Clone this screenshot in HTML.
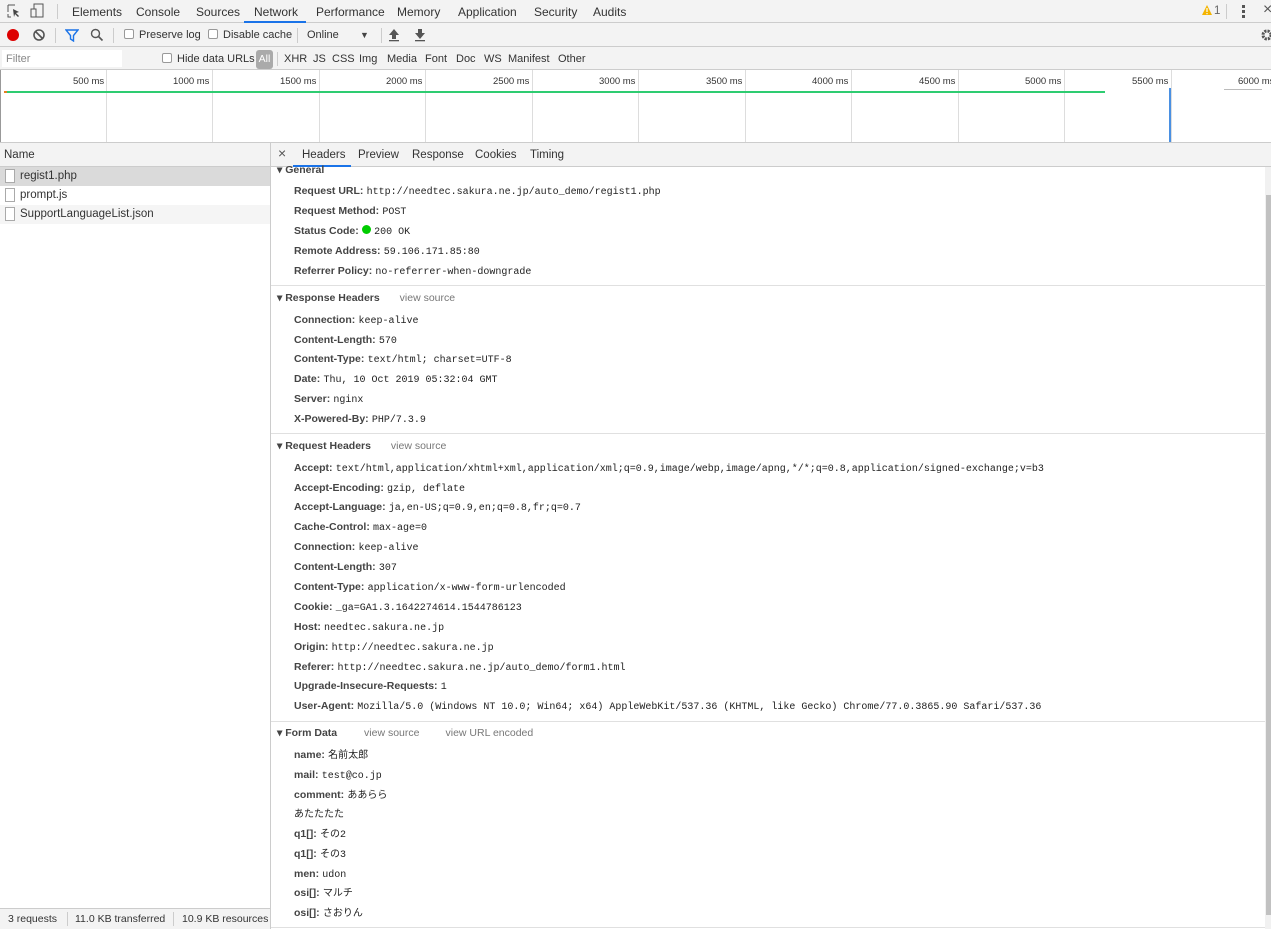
<!DOCTYPE html><html><head><meta charset="utf-8"><style>
*{margin:0;padding:0;box-sizing:border-box}
body{width:1271px;height:929px;overflow:hidden;background:#fff;font-family:"Liberation Sans","Noto Sans CJK JP",sans-serif;font-size:11.5px;color:#333;position:relative}
.a{position:absolute;white-space:nowrap;line-height:15px}
.a span{line-height:15px}
.bar{position:absolute;left:0;width:1271px;background:#f3f3f3;border-bottom:1px solid #ccc}
.tab{position:absolute;top:5px;font-size:12px;color:#333;white-space:nowrap}
.mono{font-family:"Liberation Mono","Noto Sans CJK JP",monospace;font-size:10px;color:#222}
.k{font-weight:bold;color:#444;font-size:10.5px}
.sec{font-weight:bold;color:#444;font-size:10.5px}
.vs{color:#777;font-size:10.5px;font-weight:normal}
.tm{position:absolute;top:76px;font-size:9.5px;color:#333;white-space:nowrap}
.vl{position:absolute;top:70px;height:72px;width:1px;background:#ddd}
.cb{display:inline-block;width:10px;height:10px;border:1px solid #999;border-radius:2px;vertical-align:-1px;margin-right:5px;background:#fff}
.f{position:absolute;top:53px;font-size:11px;white-space:nowrap}
</style></head><body>
<div class="bar" style="top:0;height:23px"></div>
<svg class="a" style="left:7px;top:4px" width="14" height="14"><path d="M1 1h7M1 1v7M1 10v3h3" stroke="#555" fill="none"/><path d="M6 5l6 3-3 1 3 3-1 1-3-3-1 3z" fill="#444"/></svg>
<svg class="a" style="left:30px;top:3px" width="16" height="16"><rect x="4" y="1" width="9" height="13" stroke="#555" fill="none"/><rect x="1" y="6" width="5" height="8" stroke="#555" fill="#f3f3f3"/></svg>
<div class="a" style="left:57px;top:4px;width:1px;height:15px;background:#ccc"></div>
<span class="tab" style="left:72px">Elements</span><span class="tab" style="left:136px">Console</span><span class="tab" style="left:196px">Sources</span><span class="tab" style="left:254px">Network</span><span class="tab" style="left:316px">Performance</span><span class="tab" style="left:397px">Memory</span><span class="tab" style="left:458px">Application</span><span class="tab" style="left:534px">Security</span><span class="tab" style="left:593px">Audits</span>
<div class="a" style="left:244px;top:21px;width:62px;height:2px;background:#1a73e8"></div>
<svg class="a" style="left:1201px;top:4px" width="12" height="12"><path d="M6 1L11 11H1z" fill="#f4b400"/><rect x="5.4" y="4" width="1.2" height="4" fill="#fff"/><rect x="5.4" y="9" width="1.2" height="1.2" fill="#fff"/></svg>
<span class="a" style="left:1214px;top:4px;color:#666">1</span>
<div class="a" style="left:1226px;top:4px;width:1px;height:15px;background:#ccc"></div>
<div class="a" style="left:1242px;top:5px;width:3px;height:3px;background:#555;box-shadow:0 5px 0 #555,0 10px 0 #555"></div>
<span class="a" style="left:1263px;top:2px;font-size:16px;color:#555">×</span>

<div class="bar" style="top:23px;height:24px"></div>
<div class="a" style="left:7px;top:29px;width:12px;height:12px;border-radius:50%;background:#d00"></div>
<svg class="a" style="left:33px;top:29px" width="12" height="12"><circle cx="6" cy="6" r="5" stroke="#555" stroke-width="1.6" fill="none"/><path d="M2.5 2.5l7 7" stroke="#555" stroke-width="1.6"/></svg>
<div class="a" style="left:55px;top:28px;width:1px;height:15px;background:#ccc"></div>
<svg class="a" style="left:65px;top:29px" width="14" height="13"><path d="M1 1h12L8.5 6.5V12L5.5 10V6.5z" stroke="#1a73e8" stroke-width="1.4" fill="none"/></svg>
<svg class="a" style="left:90px;top:28px" width="14" height="14"><circle cx="5.5" cy="5.5" r="4" stroke="#555" stroke-width="1.4" fill="none"/><path d="M8.5 8.5l4 4" stroke="#555" stroke-width="1.6"/></svg>
<div class="a" style="left:113px;top:28px;width:1px;height:15px;background:#ccc"></div>
<span class="a" style="left:124px;top:28px;font-size:11px"><span class="cb"></span>Preserve log</span>
<span class="a" style="left:208px;top:28px;font-size:11px"><span class="cb"></span>Disable cache</span>
<div class="a" style="left:297px;top:28px;width:1px;height:15px;background:#ccc"></div>
<span class="a" style="left:307px;top:28px;font-size:11px">Online</span>
<span class="a" style="left:360px;top:28px;font-size:9px;color:#444">▼</span>
<div class="a" style="left:381px;top:28px;width:1px;height:15px;background:#ccc"></div>
<svg class="a" style="left:388px;top:28px" width="12" height="14"><path d="M6 1l5 6H8v4H4V7H1z" fill="#555"/><rect x="1" y="12" width="10" height="1.3" fill="#555"/></svg>
<svg class="a" style="left:414px;top:28px" width="12" height="14"><path d="M6 11l5-6H8V1H4v4H1z" fill="#555"/><rect x="1" y="12" width="10" height="1.3" fill="#555"/></svg>
<svg class="a" style="left:1260px;top:28px" width="12" height="14"><circle cx="7" cy="7" r="4" fill="none" stroke="#555" stroke-width="3" stroke-dasharray="2.2 1"/></svg>

<div class="bar" style="top:47px;height:23px"></div>
<div class="a" style="left:2px;top:50px;width:120px;height:17px;background:#fff"></div>
<span class="a" style="left:6px;top:52px;color:#888;font-size:11px">Filter</span>
<span class="a" style="left:162px;top:52px;font-size:11px"><span class="cb"></span>Hide data URLs</span>
<div class="a" style="left:256px;top:50px;width:17px;height:19px;background:#aaa;border-radius:3px;color:#fff;text-align:center;line-height:19px;font-size:10.5px">All</div>
<div class="a" style="left:277px;top:52px;width:1px;height:14px;background:#ccc"></div>
<span class="f" style="left:284px">XHR</span><span class="f" style="left:313px">JS</span><span class="f" style="left:332px">CSS</span><span class="f" style="left:359px">Img</span><span class="f" style="left:387px">Media</span><span class="f" style="left:425px">Font</span><span class="f" style="left:456px">Doc</span><span class="f" style="left:484px">WS</span><span class="f" style="left:508px">Manifest</span><span class="f" style="left:558px">Other</span>

<div class="vl" style="left:0;background:#999"></div>
<div class="vl" style="left:106px"></div><div class="vl" style="left:212px"></div><div class="vl" style="left:319px"></div><div class="vl" style="left:425px"></div><div class="vl" style="left:532px"></div><div class="vl" style="left:638px"></div><div class="vl" style="left:745px"></div><div class="vl" style="left:851px"></div><div class="vl" style="left:958px"></div><div class="vl" style="left:1064px"></div><div class="vl" style="left:1171px"></div>
<span class="tm" style="left:73px">500 ms</span><span class="tm" style="left:173px">1000 ms</span><span class="tm" style="left:280px">1500 ms</span><span class="tm" style="left:386px">2000 ms</span><span class="tm" style="left:493px">2500 ms</span><span class="tm" style="left:599px">3000 ms</span><span class="tm" style="left:706px">3500 ms</span><span class="tm" style="left:812px">4000 ms</span><span class="tm" style="left:919px">4500 ms</span><span class="tm" style="left:1025px">5000 ms</span><span class="tm" style="left:1132px">5500 ms</span><span class="tm" style="left:1238px">6000 ms</span>
<div class="a" style="left:4px;top:91px;width:1101px;height:2px;background:#2ecc71"></div>
<div class="a" style="left:4px;top:91px;width:3px;height:2px;background:#e67e22"></div>
<div class="a" style="left:1169px;top:88px;width:2px;height:54px;background:#4a90e2"></div>
<div class="a" style="left:1224px;top:89px;width:38px;height:1px;background:#bbb"></div>
<div class="a" style="left:0;top:142px;width:1271px;height:1px;background:#ccc"></div>

<div class="bar" style="top:143px;height:24px"></div>
<span class="a" style="left:4px;top:148px">Name</span>
<div class="a" style="left:270px;top:143px;width:1px;height:786px;background:#ccc"></div>
<span class="a" style="left:278px;top:146px;font-size:14px;color:#555">×</span>
<span class="a" style="left:302px;top:148px">Headers</span><span class="a" style="left:358px;top:148px">Preview</span><span class="a" style="left:412px;top:148px">Response</span><span class="a" style="left:475px;top:148px">Cookies</span><span class="a" style="left:530px;top:148px">Timing</span>
<div class="a" style="left:293px;top:165px;width:58px;height:2px;background:#1a73e8"></div>

<div class="a" style="left:0;top:167px;width:270px;height:19px;background:#dadada"></div>
<div class="a" style="left:0;top:205px;width:270px;height:19px;background:#f5f5f5"></div>
<div class="a" style="left:5px;top:169px;width:10px;height:14px;border:1px solid #aaa;background:#fff"></div>
<div class="a" style="left:5px;top:188px;width:10px;height:14px;border:1px solid #aaa;background:#fff"></div>
<div class="a" style="left:5px;top:207px;width:10px;height:14px;border:1px solid #aaa;background:#fff"></div>
<span class="a" style="left:20px;top:169px">regist1.php</span>
<span class="a" style="left:20px;top:188px">prompt.js</span>
<span class="a" style="left:20px;top:207px">SupportLanguageList.json</span>

<div class="a" style="left:0;top:908px;width:270px;height:21px;background:#f3f3f3;border-top:1px solid #ccc"></div>
<span class="a" style="left:8px;top:912px;font-size:10.5px">3 requests</span>
<div class="a" style="left:67px;top:912px;width:1px;height:14px;background:#ccc"></div>
<span class="a" style="left:75px;top:912px;font-size:10.5px">11.0 KB transferred</span>
<div class="a" style="left:173px;top:912px;width:1px;height:14px;background:#ccc"></div>
<span class="a" style="left:182px;top:912px;font-size:10.5px">10.9 KB resources</span>

<div class="a" style="left:1265px;top:167px;width:6px;height:762px;background:#f1f1f1"></div>
<div class="a" style="left:1266px;top:195px;width:5px;height:720px;background:#c1c1c1"></div>
<div class="a" style="left:271px;top:285px;width:994px;height:1px;background:#e0e0e0"></div>
<div class="a" style="left:271px;top:433px;width:994px;height:1px;background:#e0e0e0"></div>
<div class="a" style="left:271px;top:721px;width:994px;height:1px;background:#e0e0e0"></div>
<div class="a" style="left:271px;top:927px;width:994px;height:1px;background:#e0e0e0"></div>

<span class="a sec" style="left:277px;top:163px">▾ General</span>
<span class="a" style="left:294px;top:184px"><span class="k">Request URL:</span> <span class="mono">http://needtec.sakura.ne.jp/auto_demo/regist1.php</span></span>
<span class="a" style="left:294px;top:204px"><span class="k">Request Method:</span> <span class="mono">POST</span></span>
<span class="a" style="left:294px;top:224px"><span class="k">Status Code:</span> <span style="display:inline-block;width:9px;height:9px;border-radius:50%;background:#0c0"></span> <span class="mono">200 OK</span></span>
<span class="a" style="left:294px;top:244px"><span class="k">Remote Address:</span> <span class="mono">59.106.171.85:80</span></span>
<span class="a" style="left:294px;top:264px"><span class="k">Referrer Policy:</span> <span class="mono">no-referrer-when-downgrade</span></span>

<span class="a sec" style="left:277px;top:291px">▾ Response Headers <span class="vs" style="margin-left:17px">view source</span></span>
<span class="a" style="left:294px;top:313px"><span class="k">Connection:</span> <span class="mono">keep-alive</span></span>
<span class="a" style="left:294px;top:333px"><span class="k">Content-Length:</span> <span class="mono">570</span></span>
<span class="a" style="left:294px;top:352px"><span class="k">Content-Type:</span> <span class="mono">text/html; charset=UTF-8</span></span>
<span class="a" style="left:294px;top:372px"><span class="k">Date:</span> <span class="mono">Thu, 10 Oct 2019 05:32:04 GMT</span></span>
<span class="a" style="left:294px;top:392px"><span class="k">Server:</span> <span class="mono">nginx</span></span>
<span class="a" style="left:294px;top:412px"><span class="k">X-Powered-By:</span> <span class="mono">PHP/7.3.9</span></span>

<span class="a sec" style="left:277px;top:439px">▾ Request Headers <span class="vs" style="margin-left:17px">view source</span></span>
<span class="a" style="left:294px;top:461px"><span class="k">Accept:</span> <span class="mono">text/html,application/xhtml+xml,application/xml;q=0.9,image/webp,image/apng,*/*;q=0.8,application/signed-exchange;v=b3</span></span>
<span class="a" style="left:294px;top:481px"><span class="k">Accept-Encoding:</span> <span class="mono">gzip, deflate</span></span>
<span class="a" style="left:294px;top:500px"><span class="k">Accept-Language:</span> <span class="mono">ja,en-US;q=0.9,en;q=0.8,fr;q=0.7</span></span>
<span class="a" style="left:294px;top:520px"><span class="k">Cache-Control:</span> <span class="mono">max-age=0</span></span>
<span class="a" style="left:294px;top:540px"><span class="k">Connection:</span> <span class="mono">keep-alive</span></span>
<span class="a" style="left:294px;top:560px"><span class="k">Content-Length:</span> <span class="mono">307</span></span>
<span class="a" style="left:294px;top:580px"><span class="k">Content-Type:</span> <span class="mono">application/x-www-form-urlencoded</span></span>
<span class="a" style="left:294px;top:600px"><span class="k">Cookie:</span> <span class="mono">_ga=GA1.3.1642274614.1544786123</span></span>
<span class="a" style="left:294px;top:620px"><span class="k">Host:</span> <span class="mono">needtec.sakura.ne.jp</span></span>
<span class="a" style="left:294px;top:640px"><span class="k">Origin:</span> <span class="mono">http://needtec.sakura.ne.jp</span></span>
<span class="a" style="left:294px;top:660px"><span class="k">Referer:</span> <span class="mono">http://needtec.sakura.ne.jp/auto_demo/form1.html</span></span>
<span class="a" style="left:294px;top:679px"><span class="k">Upgrade-Insecure-Requests:</span> <span class="mono">1</span></span>
<span class="a" style="left:294px;top:699px"><span class="k">User-Agent:</span> <span class="mono">Mozilla/5.0 (Windows NT 10.0; Win64; x64) AppleWebKit/537.36 (KHTML, like Gecko) Chrome/77.0.3865.90 Safari/537.36</span></span>

<span class="a sec" style="left:277px;top:726px">▾ Form Data <span class="vs" style="margin-left:24px">view source</span><span class="vs" style="margin-left:26px">view URL encoded</span></span>
<span class="a" style="left:294px;top:748px"><span class="k">name:</span> <span class="mono">名前太郎</span></span>
<span class="a" style="left:294px;top:768px"><span class="k">mail:</span> <span class="mono">test@co.jp</span></span>
<span class="a" style="left:294px;top:788px"><span class="k">comment:</span> <span class="mono">ああらら</span></span>
<span class="a" style="left:294px;top:807px"><span class="mono">あたたたた</span></span>
<span class="a" style="left:294px;top:827px"><span class="k">q1[]:</span> <span class="mono">その2</span></span>
<span class="a" style="left:294px;top:847px"><span class="k">q1[]:</span> <span class="mono">その3</span></span>
<span class="a" style="left:294px;top:867px"><span class="k">men:</span> <span class="mono">udon</span></span>
<span class="a" style="left:294px;top:886px"><span class="k">osi[]:</span> <span class="mono">マルチ</span></span>
<span class="a" style="left:294px;top:906px"><span class="k">osi[]:</span> <span class="mono">さおりん</span></span>
</body></html>
